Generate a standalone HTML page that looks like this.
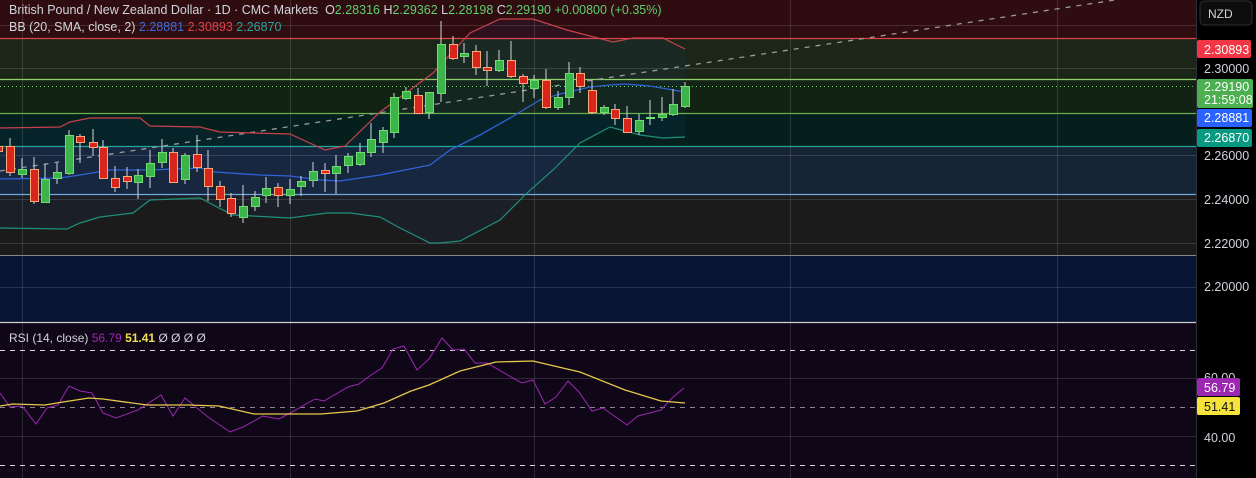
<!DOCTYPE html>
<html><head><meta charset="utf-8"><style>
html,body{margin:0;padding:0;background:#000;width:1256px;height:478px;overflow:hidden;font-family:"Liberation Sans",sans-serif}
svg{display:block}
text{white-space:pre}
</style></head><body>
<svg width="1256" height="478" xmlns="http://www.w3.org/2000/svg" font-family="Liberation Sans, sans-serif">
<rect x="0" y="0" width="1196" height="38" fill="#2e0c10"/>
<rect x="0" y="38" width="1196" height="41" fill="#1b2618"/>
<rect x="0" y="79" width="1196" height="34" fill="#132313"/>
<rect x="0" y="113" width="1196" height="33" fill="#041f1c"/>
<rect x="0" y="146" width="1196" height="48" fill="#172434"/>
<rect x="0" y="194" width="1196" height="61" fill="#1b1b1b"/>
<rect x="0" y="255" width="1196" height="67" fill="#081535"/>
<rect x="0" y="323" width="1196" height="155" fill="#0f0718"/>
<g stroke="#ffffff" stroke-opacity="0.13" stroke-width="1">
<line x1="0" y1="25.5" x2="1196" y2="25.5"/><line x1="0" y1="68.5" x2="1196" y2="68.5"/>
<line x1="0" y1="155.5" x2="1196" y2="155.5"/><line x1="0" y1="199.5" x2="1196" y2="199.5"/>
<line x1="0" y1="243.5" x2="1196" y2="243.5"/><line x1="0" y1="287.5" x2="1196" y2="287.5"/>
<line x1="0" y1="378.5" x2="1196" y2="378.5"/><line x1="0" y1="436.5" x2="1196" y2="436.5"/>
<line x1="22.5" y1="0" x2="22.5" y2="478"/><line x1="290.5" y1="0" x2="290.5" y2="478"/>
<line x1="534.5" y1="0" x2="534.5" y2="478"/><line x1="790.5" y1="0" x2="790.5" y2="478"/>
<line x1="1057.5" y1="0" x2="1057.5" y2="478"/>
</g>
<path d="M0,128 L60,127 L70,122 L90,118 L140,118 L150,126 L200,127 L220,132 L290,134 L325,150 L345,146 L380,112 L433,73 L470,33 L500,19 L533,19 L567,30 L613,42 L633,38 L663,38 L685,49 L685,137 L663,138 L640,135 L610,127 L580,143 L553,170 L527,193 L500,220 L460,241 L440,243 L430,243 L400,228 L380,217 L350,213 L327,213 L290,218 L233,215 L217,207 L200,198 L160,198 L150,200 L133,213 L100,217 L80,223 L67,228 L0,228 Z" fill="#2962ff" fill-opacity="0.06"/>
<line x1="0" y1="38.5" x2="1196" y2="38.5" stroke="#d9434b" stroke-width="1.2"/>
<line x1="0" y1="79.5" x2="1196" y2="79.5" stroke="#8fd16a" stroke-width="1.2"/>
<line x1="0" y1="86.5" x2="1196" y2="86.5" stroke="#6fcf6f" stroke-width="1" stroke-dasharray="1,3"/>
<line x1="0" y1="113.5" x2="1196" y2="113.5" stroke="#6ab04c" stroke-width="1.2"/>
<line x1="0" y1="146.5" x2="1196" y2="146.5" stroke="#26a69a" stroke-width="1.2"/>
<line x1="0" y1="194.5" x2="1196" y2="194.5" stroke="#6fa8dc" stroke-width="1.2"/>
<line x1="0" y1="255.5" x2="1196" y2="255.5" stroke="#888" stroke-width="1"/>
<line x1="0" y1="171" x2="1115" y2="0" stroke="#9a9a9a" stroke-width="1.3" stroke-dasharray="5,6"/>
<polyline fill="none" stroke="#c9414b" stroke-width="1.2" points="0,128 60,127 70,122 90,118 140,118 150,126 200,127 220,132 290,134 325,150 345,146 380,112 433,73 470,33 500,19 533,19 567,30 613,42 633,38 663,38 685,49"/>
<polyline fill="none" stroke="#2f62d8" stroke-width="1.3" points="0,179 60,178 80,175 110,170 150,170 200,168 215,172 260,175 290,176 320,180 340,181 380,175 400,171 430,165 450,150 480,135 510,118 540,100 560,94 590,87 610,85 625,84 650,86 685,92"/>
<polyline fill="none" stroke="#1f8f7a" stroke-width="1.2" points="0,228 67,229 80,223 100,217 133,213 150,200 200,198 217,207 233,215 290,218 327,213 350,213 380,217 400,228 430,243 440,243 460,241 500,220 527,193 553,170 580,143 610,127 640,135 663,138 685,137"/>
<line x1="-1" y1="138" x2="-1" y2="176" stroke="#d1d4dc"/>
<line x1="0" y1="322.5" x2="1256" y2="322.5" stroke="#cfcfcf" stroke-width="1.2"/>
<g stroke="#d8d8d8" stroke-width="1" stroke-dasharray="5,5">
<line x1="0" y1="350.5" x2="1196" y2="350.5"/><line x1="0" y1="407.5" x2="1196" y2="407.5" stroke-opacity="0.6"/><line x1="0" y1="465.5" x2="1196" y2="465.5"/>
</g>
<polyline fill="none" stroke="#9c27b0" stroke-width="1" points="0,393 10,407 22,406 36,424 47,408 58,405 69,386 80,391 92,393 103,413 116,418 138,410 161,395 173,416 185,398 208,417 230,432 243,427 263,416 279,419 292,412 315,399 324,401 348,387 359,384 371,375 382,368 393,349 404,346 417,370 429,359 442,338 453,350 464,349 475,363 487,363 511,377 522,383 533,380 545,404 556,397 568,381 579,392 592,411 603,408 627,425 638,416 661,410 672,398 684,388"/>
<polyline fill="none" stroke="#e6c84a" stroke-width="1.3" points="0,406 13,404 45,405 63,402 89,398 103,399 147,405 188,405 219,406 254,414 321,414 357,411 384,403 411,391 429,385 460,371 496,362 533,361 567,369 580,372 625,390 661,401 685,403"/>
<text x="9" y="342" font-size="12" fill="#d1d4dc">RSI (14, close) <tspan fill="#9c27b0">56.79</tspan> <tspan fill="#f0e04a" font-weight="bold">51.41</tspan> <tspan fill="#d1d4dc">Ø Ø Ø Ø</tspan></text>
<text x="9" y="14" font-size="12.5" fill="#d1d4dc">British Pound / New Zealand Dollar · 1D · CMC Markets  O<tspan fill="#5fcf6f">2.28316</tspan> H<tspan fill="#5fcf6f">2.29362</tspan> L<tspan fill="#5fcf6f">2.28198</tspan> C<tspan fill="#5fcf6f">2.29190</tspan> <tspan fill="#5fcf6f">+0.00800 (+0.35%)</tspan></text>
<text x="9" y="31" font-size="12.5" fill="#d1d4dc">BB (20, SMA, close, 2) <tspan fill="#3d6be0">2.28881</tspan> <tspan fill="#e0414b">2.30893</tspan> <tspan fill="#26a69a">2.26870</tspan></text>
<rect x="1196" y="0" width="60" height="478" fill="#000"/>
<line x1="1196.5" y1="0" x2="1196.5" y2="478" stroke="#2a2e39"/>
<rect x="1200" y="1" width="52" height="24" rx="4" fill="#0d0d0d" stroke="#2f2f2f"/>
<text x="1208" y="18" font-size="12" fill="#d1d4dc">NZD</text>
<g font-size="12.5" fill="#d1d4dc">
<rect x="1197" y="40" width="54" height="18" rx="2" fill="#f23645"/><text x="1204" y="54" fill="#fff">2.30893</text>
<text x="1204" y="73">2.30000</text>
<rect x="1197" y="79" width="56" height="29" rx="2" fill="#4caf50"/><text x="1204" y="91" fill="#fff">2.29190</text><text x="1204" y="104" fill="#fff">21:59:08</text>
<rect x="1197" y="109" width="55" height="18" rx="2" fill="#2962ff"/><text x="1204" y="122" fill="#fff">2.28881</text>
<rect x="1197" y="129" width="55" height="18" rx="2" fill="#089981"/><text x="1204" y="142" fill="#fff">2.26870</text>
<text x="1204" y="160">2.26000</text>
<text x="1204" y="204">2.24000</text>
<text x="1204" y="248">2.22000</text>
<text x="1204" y="291">2.20000</text>
<text x="1204" y="382">60.00</text>
<rect x="1197" y="378" width="43" height="18" rx="2" fill="#9c27b0"/><text x="1204" y="392" fill="#fff">56.79</text>
<rect x="1197" y="397" width="43" height="18" rx="2" fill="#f5e23b"/><text x="1204" y="411" fill="#111">51.41</text>
<text x="1204" y="442">40.00</text>
</g>
<g stroke-width="1">
<g stroke="#d1d4dc">
<line x1="10" y1="138" x2="10" y2="176"/><line x1="22" y1="158" x2="22" y2="178"/><line x1="34" y1="157" x2="34" y2="204"/><line x1="45" y1="164" x2="45" y2="203"/><line x1="57" y1="163" x2="57" y2="184"/><line x1="69" y1="130" x2="69" y2="175"/><line x1="80" y1="134" x2="80" y2="163"/><line x1="93" y1="129" x2="93" y2="156"/><line x1="103" y1="140" x2="103" y2="179"/><line x1="115" y1="166" x2="115" y2="192"/><line x1="127" y1="167" x2="127" y2="189"/><line x1="138" y1="169" x2="138" y2="199"/><line x1="150" y1="150" x2="150" y2="188"/><line x1="162" y1="139" x2="162" y2="168"/><line x1="173" y1="148" x2="173" y2="183"/><line x1="185" y1="153" x2="185" y2="184"/><line x1="197" y1="135" x2="197" y2="172"/><line x1="208" y1="150" x2="208" y2="201"/><line x1="220" y1="181" x2="220" y2="207"/><line x1="231" y1="193" x2="231" y2="217"/><line x1="243" y1="185" x2="243" y2="223"/><line x1="255" y1="191" x2="255" y2="211"/><line x1="266" y1="177" x2="266" y2="203"/><line x1="278" y1="183" x2="278" y2="207"/><line x1="290" y1="179" x2="290" y2="204"/><line x1="301" y1="176" x2="301" y2="196"/><line x1="313" y1="162" x2="313" y2="187"/><line x1="325" y1="163" x2="325" y2="192"/><line x1="336" y1="155" x2="336" y2="194"/><line x1="348" y1="153" x2="348" y2="173"/><line x1="360" y1="143" x2="360" y2="166"/><line x1="371" y1="123" x2="371" y2="157"/><line x1="383" y1="127" x2="383" y2="153"/><line x1="394" y1="93" x2="394" y2="138"/><line x1="406" y1="87" x2="406" y2="100"/><line x1="418" y1="88" x2="418" y2="114"/><line x1="429" y1="92" x2="429" y2="119"/><line x1="441" y1="21" x2="441" y2="102"/><line x1="453" y1="36" x2="453" y2="60"/><line x1="464" y1="43" x2="464" y2="63"/><line x1="476" y1="45" x2="476" y2="75"/><line x1="487" y1="51" x2="487" y2="86"/><line x1="499" y1="50" x2="499" y2="72"/><line x1="511" y1="41" x2="511" y2="78"/><line x1="523" y1="74" x2="523" y2="102"/><line x1="534" y1="75" x2="534" y2="98"/><line x1="546" y1="69" x2="546" y2="109"/><line x1="558" y1="91" x2="558" y2="110"/><line x1="569" y1="62" x2="569" y2="105"/><line x1="580" y1="67" x2="580" y2="93"/><line x1="592" y1="80" x2="592" y2="114"/><line x1="604" y1="105" x2="604" y2="115"/><line x1="615" y1="104" x2="615" y2="125"/><line x1="627" y1="106" x2="627" y2="133"/><line x1="639" y1="114" x2="639" y2="135"/><line x1="650" y1="100" x2="650" y2="125"/><line x1="662" y1="97" x2="662" y2="121"/><line x1="673" y1="89" x2="673" y2="116"/><line x1="685" y1="82" x2="685" y2="108"/>
</g>
<g fill="#d8261c" stroke="#f7a97a">
<rect x="-5.5" y="146.5" width="8" height="5"/>
<rect x="6.5" y="146.5" width="8" height="26"/><rect x="30.5" y="169.5" width="8" height="32"/><rect x="76.5" y="136.5" width="8" height="6"/><rect x="89.5" y="142.5" width="8" height="5"/><rect x="99.5" y="147.5" width="8" height="31"/><rect x="111.5" y="178.5" width="8" height="9"/><rect x="123.5" y="176.5" width="8" height="5"/><rect x="169.5" y="152.5" width="8" height="30"/><rect x="193.5" y="154.5" width="8" height="13"/><rect x="204.5" y="168.5" width="8" height="18"/><rect x="216.5" y="186.5" width="8" height="13"/><rect x="227.5" y="198.5" width="8" height="15"/><rect x="274.5" y="187.5" width="8" height="8"/><rect x="321.5" y="170.5" width="8" height="3"/><rect x="414.5" y="95.5" width="8" height="18"/><rect x="449.5" y="44.5" width="8" height="14"/><rect x="472.5" y="51.5" width="8" height="16"/><rect x="483.5" y="67.5" width="8" height="3"/><rect x="507.5" y="60.5" width="8" height="16"/><rect x="519.5" y="76.5" width="8" height="7"/><rect x="542.5" y="80.5" width="8" height="27"/><rect x="576.5" y="73.5" width="8" height="13"/><rect x="588.5" y="90.5" width="8" height="22"/><rect x="611.5" y="109.5" width="8" height="9"/><rect x="623.5" y="118.5" width="8" height="14"/>
</g>
<g fill="#3cb44a" stroke="#6fdc6f">
<rect x="18.5" y="169.5" width="8" height="5"/><rect x="41.5" y="179.5" width="8" height="23"/><rect x="53.5" y="172.5" width="8" height="6"/><rect x="65.5" y="135.5" width="8" height="38"/><rect x="134.5" y="175.5" width="8" height="7"/><rect x="146.5" y="163.5" width="8" height="13"/><rect x="158.5" y="152.5" width="8" height="10"/><rect x="181.5" y="155.5" width="8" height="24"/><rect x="239.5" y="206.5" width="8" height="11"/><rect x="251.5" y="197.5" width="8" height="9"/><rect x="262.5" y="188.5" width="8" height="7"/><rect x="286.5" y="189.5" width="8" height="6"/><rect x="297.5" y="181.5" width="8" height="5"/><rect x="309.5" y="171.5" width="8" height="9"/><rect x="332.5" y="166.5" width="8" height="7"/><rect x="344.5" y="156.5" width="8" height="9"/><rect x="356.5" y="152.5" width="8" height="12"/><rect x="367.5" y="139.5" width="8" height="13"/><rect x="379.5" y="130.5" width="8" height="12"/><rect x="390.5" y="97.5" width="8" height="35"/><rect x="402.5" y="91.5" width="8" height="7"/><rect x="425.5" y="92.5" width="8" height="20"/><rect x="437.5" y="44.5" width="8" height="49"/><rect x="460.5" y="53.5" width="8" height="3"/><rect x="495.5" y="60.5" width="8" height="10"/><rect x="530.5" y="80.5" width="8" height="8"/><rect x="554.5" y="97.5" width="8" height="10"/><rect x="565.5" y="73.5" width="8" height="24"/><rect x="600.5" y="107.5" width="8" height="5"/><rect x="635.5" y="120.5" width="8" height="11"/><rect x="646.5" y="117.5" width="8" height="1"/><rect x="658.5" y="114.5" width="8" height="3"/><rect x="669.5" y="104.5" width="8" height="10"/><rect x="681.5" y="86.5" width="8" height="20"/>
</g>
</g>
</svg>
</body></html>
